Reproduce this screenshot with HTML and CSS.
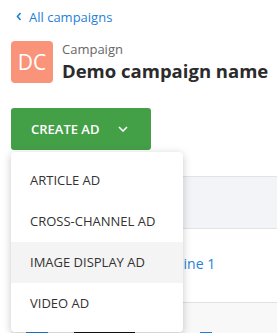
FILE: index.html
```html
<!DOCTYPE html>
<html lang="en">
<head>
<meta charset="UTF-8">
<meta name="viewport" content="width=device-width, initial-scale=1.0">
<title>Demo campaign</title>
<link rel="stylesheet" href="styles.css">
</head>
<body>
<div class="page">
  <a class="back" href="#">
    <svg width="6" height="9" viewBox="0 0 6 9"><path d="M4.5 1 1.5 4.5 4.5 8" fill="none" stroke="currentColor" stroke-width="1.6"/></svg>
    All campaigns
  </a>
  <div class="header">
    <div class="avatar">DC</div>
    <div class="titles">
      <div class="label">Campaign</div>
      <div class="name">Demo campaign name</div>
    </div>
  </div>
  <div class="actions">
    <button class="create">CREATE AD
      <svg width="10" height="6" viewBox="0 0 10 6"><path d="M1 1 5 5 9 1" fill="none" stroke="currentColor" stroke-width="1.6"/></svg>
    </button>
    <ul class="menu">
      <li>ARTICLE AD</li>
      <li>CROSS-CHANNEL AD</li>
      <li class="hover">IMAGE DISPLAY AD</li>
      <li>VIDEO AD</li>
    </ul>
  </div>
  <div class="table">
    <div class="thead"></div>
    <div class="row"><a class="cell-link" href="#">Demo line 1</a></div>
    <div class="row alt">
      <span class="tag blue"></span>
      <span class="tag black"></span>
      <span class="tag blue short"></span>
    </div>
  </div>
</div>
</body>
</html>
```
FILE: styles.css
```css
body{margin:0;font-family:"Open Sans","Lato",sans-serif;color:#333;background:#fff;overflow:hidden;}
.page{padding:8px 0 0 11px;}
.back{display:flex;align-items:center;gap:7px;color:#1f7fd8;text-decoration:none;font-size:13px;height:17px;padding-left:5px;}
.header{display:flex;align-items:center;gap:9px;margin-top:15px;}
.avatar{width:42px;height:42px;border-radius:4px;background:#f9937a;color:#fff;font-size:21px;display:flex;align-items:center;justify-content:center;}
.titles{padding-top:1px;}
.label{font-size:13px;color:#666;line-height:17px;margin-bottom:1px;}
.name{font-size:18.5px;font-weight:700;color:#2b2b2b;line-height:24px;}
.actions{position:relative;margin-top:25px;}
.create{display:flex;align-items:center;gap:18px;background:#43a047;color:#fff;border:none;border-radius:3px;height:42px;width:140px;padding:0 0 0 20px;font-family:inherit;font-size:13px;font-weight:600;}
.menu{position:absolute;left:0;top:44px;z-index:2;margin:0;padding:8px 0;list-style:none;width:172px;background:#fff;border-radius:4px;box-shadow:0 2px 8px rgba(0,0,0,0.22);}
.menu li{height:41px;line-height:41px;padding-left:19px;font-size:13px;color:#333;}
.menu li.hover{background:#f4f4f4;}
.table{margin-top:26px;border-top:1px solid #e3e3e3;}
.thead{height:51px;background:#f3f4f8;border-bottom:1px solid #e3e3e3;}
.row{height:73px;border-bottom:1px solid #e0e0e0;display:flex;align-items:center;}
.cell-link{color:#1f7fd8;text-decoration:none;font-size:14px;margin-left:126px;margin-bottom:5px;}
.row.alt{background:#f8f8f8;align-items:flex-start;height:40px;}
.tag{display:inline-block;height:6px;margin-top:29px;}
.tag.blue{background:#1f7fd8;width:22px;margin-left:15px;}
.tag.black{background:#111;width:61px;margin-left:26px;}
.tag.short{width:12px;margin-left:65px;}
```
